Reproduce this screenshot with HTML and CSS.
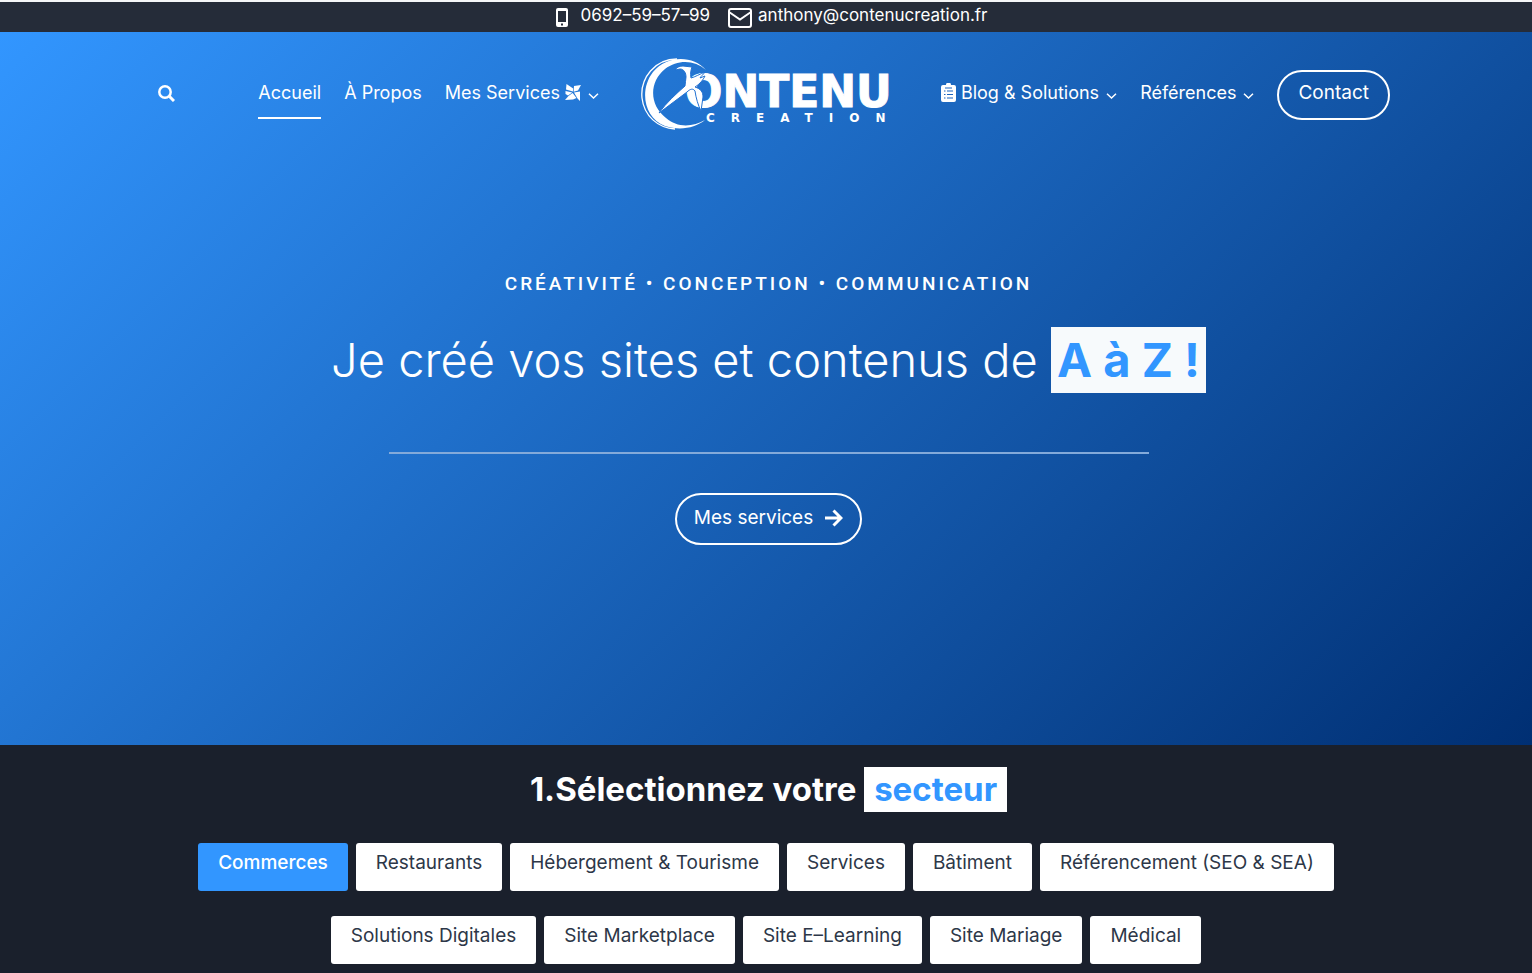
FILE: index.html
```html
<!DOCTYPE html>
<html lang="fr">
<head>
<meta charset="utf-8">
<title>Contenu Création</title>
<link rel="stylesheet" href="styles.css">
</head>
<body>
<div class="topbar">
  <a class="contact-link" href="tel:0692595799">
    <svg class="icon-phone" width="12" height="19" viewBox="0 0 12 19"><path fill="#fff" fill-rule="evenodd" d="M2 0h8a2 2 0 0 1 2 2v15a2 2 0 0 1-2 2H2a2 2 0 0 1-2-2V2a2 2 0 0 1 2-2zM2 3v11h8V3zM5 15.500v2h2v-2z"/></svg>
    <span>0692–59–57–99</span>
  </a>
  <a class="contact-link mail" href="mailto:anthony@contenucreation.fr">
    <svg class="icon-mail" width="24" height="20" viewBox="0 0 24 20" fill="none" stroke="#fff" stroke-width="2"><rect x="1" y="1" width="22" height="18" rx="2"/><path d="M1 4l11 7.500L23 4"/></svg>
    <span>anthony@contenucreation.fr</span>
  </a>
</div>
<div class="hero">
  <header class="header">
    <div class="header-left">
      <button class="search" aria-label="Rechercher"><svg width="17" height="17" viewBox="0 0 17 17" fill="none" stroke="#fff"><circle cx="7" cy="7" r="5.700" stroke-width="2.500"/><path d="M11.300 11.300l4.700 4.700" stroke-width="3"/></svg></button>
      <nav class="nav">
        <a class="active" href="#">Accueil</a>
        <a href="#">À Propos</a>
        <a href="#">Mes Services
          <svg width="16" height="17" viewBox="0 0 16 17" fill="#fff"><path d="M1.500 0L8.200 4.500 7.900 7.600 1 5.500zM9 2L16 1 13 6.500 8.600 7.800zM.5 7L7.300 8.400 3 11.500.5 10zM9 8.600L15 7.500V17L12.500 14.500zM7.600 9L11.500 14 8 15.500 0 16 3.500 12z"/></svg>
          <svg class="chevron" width="11" height="6" viewBox="0 0 11 6" fill="none" stroke="#fff" stroke-width="1.500"><path d="M1 .8l4.500 4.200L10 .8"/></svg></a>
      </nav>
    </div>
    <a class="logo" href="#" aria-label="Contenu Creation">
      <svg width="258" height="74" viewBox="0 0 258 74" fill="#fff">
        <text class="logo-name" x="44" y="49">ONTENU</text>
        <text class="logo-sub" x="65" y="64">CREATIO<tspan class="logo-end">N</tspan></text>
        <path fill-rule="evenodd" d="M65 12C52-3 26-3 12 14-2 32 3 60 24 68c15 5 30 2 40-6-12 7-28 8-39-2C8 47 8 24 24 11 37 1 54 2 65 12z"/>
        <path fill="none" stroke="#fff" stroke-width="1.300" d="M36 1C14 1-1 20 1 40c2 18 16 30 33 31"/>
        <path stroke="#2171d2" stroke-width="1" d="M34 12c2-3 5-4 8-4l9 1c-1 3-2 6-1 11 4-1 9-4 14-6-2 3-4 4-5 6l5-2c-3 6-7 9-10 11 6 2 8 5 8 10l-2 14c-3-6-5-13-6-20-2-3-5-2-8 1L18 55c7-10 17-19 26-27 0-3 1-6 1-9 0-4-2-8-6-8z"/>
      </svg>
    </a>
    <nav class="nav nav-right">
      <a href="#"><svg class="clipboard" width="15" height="19" viewBox="0 0 15 19"><path fill="#fff" d="M2 2h3a2.500 2.500 0 0 1 5 0h3a2 2 0 0 1 2 2v13a2 2 0 0 1-2 2H2a2 2 0 0 1-2-2V4a2 2 0 0 1 2-2z"/><path stroke="#1b65c0" stroke-width="1.200" fill="none" d="M4 5h7M3 8h1.500M6 8h6M3 11.500h1.500M6 11.500h6M3 15h1.500M6 15h6"/></svg>Blog &amp; Solutions
        <svg class="chevron" width="11" height="6" viewBox="0 0 11 6" fill="none" stroke="#fff" stroke-width="1.500"><path d="M1 .8l4.500 4.200L10 .8"/></svg></a>
      <a href="#">Références
        <svg class="chevron" width="11" height="6" viewBox="0 0 11 6" fill="none" stroke="#fff" stroke-width="1.500"><path d="M1 .8l4.500 4.200L10 .8"/></svg></a>
      <a class="pill" href="#">Contact</a>
    </nav>
  </header>
  <main class="intro">
    <p class="tagline">CRÉATIVITÉ • CONCEPTION • COMMUNICATION</p>
    <h1>Je créé vos sites et contenus de <mark>A à Z !</mark></h1>
    <hr>
    <a class="pill services" href="#sectors">Mes services
      <svg width="18" height="18" viewBox="0 0 18 18" fill="none" stroke="#fff" stroke-width="3"><path d="M0 9h15M8.500 1.500L16 9l-7.500 7.500"/></svg></a>
  </main>
</div>
<section class="sectors" id="sectors">
  <h2>1.Sélectionnez votre <mark>secteur</mark></h2>
  <div class="tabs">
    <button class="selected">Commerces</button>
    <button>Restaurants</button>
    <button>Hébergement &amp; Tourisme</button>
    <button>Services</button>
    <button>Bâtiment</button>
    <button>Référencement (SEO &amp; SEA)</button>
    <button>Solutions Digitales</button>
    <button>Site Marketplace</button>
    <button>Site E–Learning</button>
    <button>Site Mariage</button>
    <button>Médical</button>
  </div>
</section>
</body>
</html>
```
FILE: styles.css
```css
* { box-sizing: border-box; }
body { margin: 0; background: #1a202c; color: #fff; font-family: Inter, sans-serif; }
a { color: inherit; text-decoration: none; }
button { font: inherit; border: 0; cursor: pointer; }
svg { flex: none; }

.topbar { display: flex; justify-content: center; gap: 18px; height: 32px; padding: 0 0 2px 12px; border-top: 2px solid #f5f7f8; background: #252c39; font-size: 17px; line-height: 26px; }
.contact-link { display: flex; gap: 12px; }
.contact-link.mail { gap: 6px; }
.icon-phone, .icon-mail { margin-top: 6px; }

.hero { min-height: 713px; background: linear-gradient(135deg, #3296ff 0%, #002f73 100%); }
.header { display: flex; align-items: center; gap: 42px; height: 126px; padding: 0 142px 0 158px; }
.header-left { flex: 1; display: flex; align-items: center; justify-content: space-between; }
.search { display: flex; padding: 0 0 4px; background: none; }
.nav { display: flex; align-items: center; gap: 23px; font-size: 18px; white-space: nowrap; }
.nav a { display: flex; align-items: center; gap: 5px; }
.nav a:not(.pill) { height: 48px; padding-bottom: 3px; border-bottom: 2px solid transparent; }
.nav a.active { border-color: #fff; }
.nav .chevron { margin: 6px 0 0 2px; }
.logo { display: flex; }
.logo-name { font: bold 44px "DejaVu Sans", sans-serif; stroke: #fff; stroke-width: 1px; }
.logo-sub { font: bold 12px "DejaVu Sans", sans-serif; letter-spacing: 16px; }
.logo-end { letter-spacing: 0; }
.nav a.pill, .pill { display: inline-flex; align-items: center; justify-content: center; height: 50px; padding: 0 19px 5px; border: 2px solid #fff; border-radius: 26px; font-size: 19px; }

.intro { display: flex; flex-direction: column; align-items: center; padding: 112px 0 0 5px; }
.tagline { margin: 0; font: 500 19px/28px Roboto, sans-serif; letter-spacing: 3px; }
h1 { margin: 29px 0 59px; font-size: 47px; font-weight: 300; line-height: 66px; }
mark { display: inline-block; color: #3296ff; background: #f7fafc; }
h1 mark { padding: 0 6px; font-weight: 700; }
hr { width: 760px; max-width: 90%; margin: 0 0 39px; border: 0; border-top: 2px solid #83aada; }
.pill.services { gap: 12px; height: 52px; padding: 0 17px 3px; }

.sectors { padding: 22px 190px 10px; }
h2 { margin: 0 0 31px 5px; font-size: 33px; line-height: 45px; text-align: center; }
h2 mark { padding: 0 10px; background: #fff; }
.tabs { display: flex; flex-wrap: wrap; justify-content: center; gap: 25px 8px; }
.tabs button { height: 48px; padding: 0 20px 10px; border-radius: 3px; background: #fff; color: #2d3748; font-size: 19px; white-space: nowrap; }
.tabs .selected { background: #3296ff; color: #fff; font-weight: 500; }
```
